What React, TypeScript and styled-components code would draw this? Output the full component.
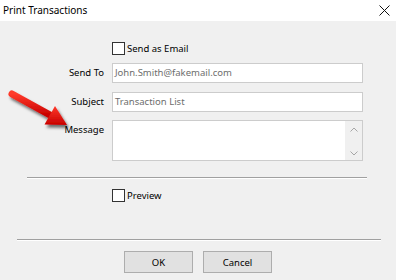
import React from 'react';
import styled, { createGlobalStyle } from 'styled-components';

const GlobalStyle = createGlobalStyle`
  html, body {
    margin: 0;
    padding: 0;
    background: #f0f0f0;
  }
  body {
    font-family: "Noto Sans", "Liberation Sans", sans-serif;
    color: #000;
  }
`;

const Window = styled.div`
  position: relative;
  width: 396px;
  height: 280px;
  background: #f0f0f0;
  overflow: hidden;
  display: flex;
  flex-direction: column;
  font-size: 9.5px;
`;

const TitleBar = styled.div`
  height: 21px;
  background: #fff;
  display: flex;
  align-items: center;
  justify-content: space-between;
  padding: 0 6px 0 3px;
  flex-shrink: 0;
`;

const Title = styled.span`
  font-size: 10px;
  line-height: 21px;
`;

const Body = styled.div`
  display: flex;
  flex-direction: column;
  padding-top: 21px;
`;

const FormGrid = styled.div`
  display: grid;
  grid-template-columns: 104px 251px;
  grid-template-rows: 13px 21px 20px 41px;
  column-gap: 8px;
  row-gap: 8px;
  align-items: start;
`;

const Label = styled.label`
  text-align: right;
  line-height: 20px;
  white-space: nowrap;
`;

const CheckRow = styled.div<{ $indent?: number; $top?: number }>`
  display: flex;
  align-items: center;
  height: 13px;
  margin-left: ${({ $indent }) => $indent ?? 0}px;
  margin-top: ${({ $top }) => $top ?? 0}px;
`;

const Box = styled.span`
  width: 13px;
  height: 13px;
  box-sizing: border-box;
  border: 1px solid #333;
  background: #fff;
  flex-shrink: 0;
`;

const CheckText = styled.span`
  margin-left: 2px;
  line-height: 13px;
`;

const TextInput = styled.div`
  height: 20px;
  box-sizing: border-box;
  border: 1px solid #cccccc;
  background: #fff;
  color: #6d6d6d;
  padding-left: 2px;
  line-height: 18px;
  white-space: nowrap;
  overflow: hidden;
`;

const MessageBox = styled.div`
  height: 41px;
  box-sizing: border-box;
  border: 1px solid #cccccc;
  background: #fff;
  display: flex;
  justify-content: flex-end;
`;

const ScrollBar = styled.div`
  width: 17px;
  background: #f0f0f0;
  display: flex;
  flex-direction: column;
  justify-content: space-between;
  align-items: center;
  padding: 6px 0 4px;
`;

const Separator = styled.div<{ $left: number; $width: number; $top: number }>`
  margin-left: ${({ $left }) => $left}px;
  margin-top: ${({ $top }) => $top}px;
  width: ${({ $width }) => $width}px;
  height: 1px;
  background: #a0a0a0;
  border-bottom: 1px solid #fff;
`;

const ButtonRow = styled.div`
  display: flex;
  gap: 10px;
  padding-left: 124px;
  margin-top: 10px;
`;

const Button = styled.button`
  width: 69px;
  height: 22px;
  box-sizing: border-box;
  background: #e1e1e1;
  border: 1px solid #adadad;
  font-family: inherit;
  font-size: 9.5px;
  color: #000;
  padding: 0;
`;

const Arrow = styled.svg`
  position: absolute;
  left: 0;
  top: 0;
  pointer-events: none;
`;

const Chevron = ({ up }: { up?: boolean }) => (
  <svg width="8" height="5" viewBox="0 0 8 5">
    <path
      d={up ? 'M0.5 4.5 L4 1 L7.5 4.5' : 'M0.5 0.5 L4 4 L7.5 0.5'}
      fill="none"
      stroke="#a6a6a6"
      strokeWidth="1"
    />
  </svg>
);

export default function App() {
  return (
    <>
      <GlobalStyle />
      <Window>
        <TitleBar>
          <Title>Print Transactions</Title>
          <svg width="11" height="11" viewBox="0 0 11 11">
            <path d="M0.5 0.5 L10.5 10.5 M10.5 0.5 L0.5 10.5" stroke="#111" strokeWidth="1" />
          </svg>
        </TitleBar>
        <Body>
          <FormGrid>
            <span />
            <CheckRow>
              <Box />
              <CheckText>Send as Email</CheckText>
            </CheckRow>
            <Label>Send To</Label>
            <TextInput>John.Smith@fakemail.com</TextInput>
            <Label>Subject</Label>
            <TextInput>Transaction List</TextInput>
            <Label>Message</Label>
            <MessageBox>
              <ScrollBar>
                <Chevron up />
                <Chevron />
              </ScrollBar>
            </MessageBox>
          </FormGrid>
          <Separator $left={27} $width={340} $top={16} />
          <CheckRow $indent={112} $top={10}>
            <Box />
            <CheckText>Preview</CheckText>
          </CheckRow>
          <Separator $left={17} $width={364} $top={37} />
          <ButtonRow>
            <Button>OK</Button>
            <Button>Cancel</Button>
          </ButtonRow>
        </Body>
        <Arrow width="90" height="140" viewBox="0 0 90 140">
          <defs>
            <linearGradient id="red" x1="0" y1="0" x2="0" y2="1">
              <stop offset="0" stopColor="#ff3a2a" />
              <stop offset="1" stopColor="#c80000" />
            </linearGradient>
            <filter id="shadow" x="-20%" y="-20%" width="160%" height="160%">
              <feDropShadow dx="2" dy="3" stdDeviation="1.6" floodColor="#000" floodOpacity="0.55" />
            </filter>
          </defs>
          <g filter="url(#shadow)">
            <path d="M12 94 L51 115.5" stroke="url(#red)" strokeWidth="7" strokeLinecap="round" />
            <path d="M67 125 L44.5 124.5 L55 106 Z" fill="url(#red)" />
          </g>
        </Arrow>
      </Window>
    </>
  );
}
